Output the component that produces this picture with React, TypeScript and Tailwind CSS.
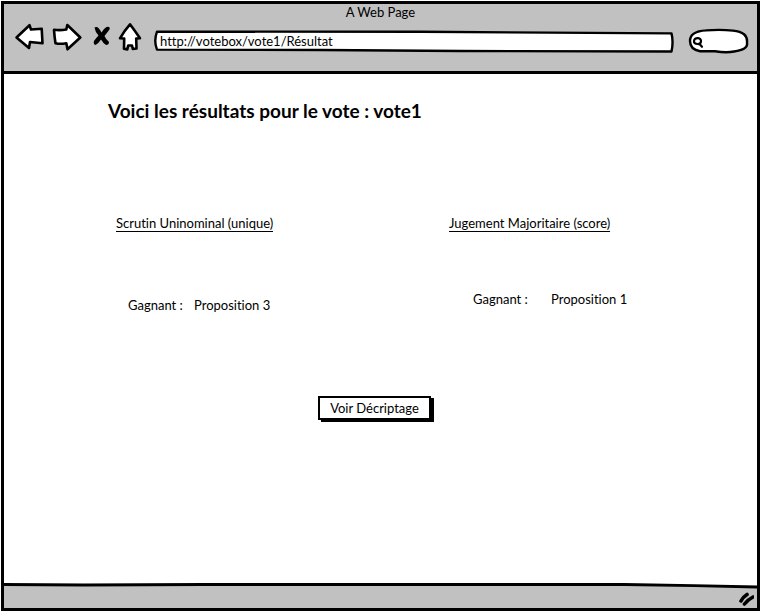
import type { ReactNode } from "react";

function ToolButton({ label, box, className, children }: { label: string; box: string; className: string; children: ReactNode }) {
  return (
    <button type="button" aria-label={label} className={`h-[30px] shrink-0 ${className}`}>
      <svg
        viewBox={box}
        className="block h-full w-full"
        fill="white"
        stroke="black"
        strokeWidth="2.6"
        strokeLinejoin="round"
        strokeLinecap="round"
      >
        {children}
      </svg>
    </button>
  );
}

function Result({ title, winner, className, rowClass, labelClass }: { title: string; winner: string; className: string; rowClass: string; labelClass: string }) {
  return (
    <section className={className}>
      <h2 className="w-fit border-b border-black leading-4">{title}</h2>
      <dl className={`flex leading-4 ${rowClass}`}>
        <dt className={`shrink-0 ${labelClass}`}>Gagnant :</dt>
        <dd>{winner}</dd>
      </dl>
    </section>
  );
}

export default function App() {
  return (
    <div className="flex min-h-screen flex-col bg-white p-px font-['Lato','Open_Sans',sans-serif] text-[13px] text-black [font-variant-ligatures:none]">
      <div className="flex grow flex-col border-[3px] border-black">
        <header className="border-b-[3px] border-black bg-[#c1c1c1] pb-[17px]">
          <p className="pt-px text-center leading-[15px]">A Web Page</p>
          <div className="flex items-center pr-2 pl-2.5">
            <ToolButton label="Précédent" box="14 22 31 30" className="w-[31px]">
              <path d="M16.5 37.5 29.5 25.2 31 29.5 41.7 28.7 42.5 43.3 30 42 29 48Z" />
            </ToolButton>
            <ToolButton label="Suivant" box="51 22 32 30" className="ml-1.5 w-8">
              <path d="M54 29.8Q60 30.6 66.3 29.5L67.3 25 80.3 37.5 67.5 49.3 66.3 43.2Q60 44.4 55.5 43.2Q54.5 37 54 29.8Z" />
            </ToolButton>
            <ToolButton label="Arrêter" box="91 22 21 30" className="ml-2 w-[21px]">
              <path
                d="M94.500 27.500Q98 25 101.500 32.500Q104 28 106.500 27Q110.500 26 109.500 29.500L104.500 36Q106 39.500 109 42Q109 45 106 45Q103 43 101 39.500Q98.500 43.500 95.500 45Q93 44 94 41Q96 38 98.500 35.500Q95 31.500 94.500 27.500Z"
                fill="black"
                stroke="none"
              />
            </ToolButton>
            <ToolButton label="Accueil" box="117 22 26 30" className="ml-[5px] w-[26px]">
              <path d="M130 24.3Q135 31 140 38.3L136.2 38.5 136.5 48.5 132.8 49 132 45.5 128.2 45.5 127.3 49.4 124 48.8 124.2 38.5 120 38.3Q124 31 130 24.3Z" />
            </ToolButton>
            <div className="relative mt-2 ml-2.5 h-6 grow">
              <svg
                viewBox="153 29 521 24"
                preserveAspectRatio="none"
                className="absolute inset-0 h-full w-full"
                fill="white"
                stroke="black"
                strokeWidth="2.4"
                strokeLinejoin="round"
                aria-hidden="true"
              >
                <path d="M157 31.6L420 31.8 671.5 33.4Q673.6 42 671.5 51.5L460 51 320 50 157 49.6Q153.5 41 157 31.6Z" />
              </svg>
              <input
                type="text"
                aria-label="Adresse"
                defaultValue="http://votebox/vote1/Résultat"
                className="relative block h-6 w-full bg-transparent pl-[7px] leading-4 outline-none"
              />
            </div>
            <div className="relative mt-2 ml-3.5 h-[26px] w-[61px] shrink-0">
              <svg
                viewBox="688 28 61 26"
                className="absolute inset-0 h-full w-full"
                fill="white"
                stroke="black"
                strokeWidth="2.4"
                strokeLinecap="round"
                aria-hidden="true"
              >
                <path d="M690 41C690 34 696 31 706 30.4Q720 29.2 733 30.6Q748 32 747 42.5C748 48 743 50 734 51.5Q726 53 715 51.2L700 51.2C693 50 690 46 690 41Z" />
                <path d="M694 41.500Q694 38 698 38.200 701.300 38.500 701 41.500 700.500 44.300 697.500 44 694 43.800 694 41.500ZM699.500 44L702 46.800" strokeWidth="2.2" />
              </svg>
              <input type="search" aria-label="Rechercher" className="relative ml-4 block h-[26px] w-10 bg-transparent outline-none" />
            </div>
          </div>
        </header>

        <main className="grow pb-10">
          <h1 className="ml-[104px] pt-[23px] text-[19px] leading-7 font-bold">
            Voici les résultats pour le vote : vote1
          </h1>
          <div className="mt-[90px] grid grid-cols-[44%_1fr] pl-[112px]">
            <Result title="Scrutin Uninominal (unique)" winner="Proposition 3" className="" rowClass="mt-[65px] ml-3" labelClass="w-[66px]" />
            <Result title="Jugement Majoritaire (score)" winner="Proposition 1" className="ml-[51px]" rowClass="mt-[59px] ml-6" labelClass="w-[78px]" />
          </div>
          <div className="mt-[83px] flex justify-center pr-3">
            <button type="button" className="h-6 border-2 border-black bg-white px-2.5 leading-4 shadow-[3px_2px_0_#000]">
              Voir Décriptage
            </button>
          </div>
        </main>

        <footer className="relative flex h-[25px] items-end justify-end bg-[#c1c1c1] pr-[3px] pb-0.5">
          <svg viewBox="0 0 753 8" preserveAspectRatio="none" className="absolute inset-x-0 top-0 h-2 w-full" aria-hidden="true">
            <path d="M0 0H753V3.5L620 1.5 0 1.5Z" fill="white" />
            <path d="M0 1.5 80 2 200 1.5 620 1.5 690 2.7 753 4" fill="none" stroke="black" strokeWidth="2.8" />
          </svg>
          <svg viewBox="738 592 16 14" className="relative h-3.5 w-4" fill="none" stroke="black" strokeLinecap="round" aria-hidden="true">
            <path d="M741 601Q743 597 747 594.5M744.5 604Q748 599.5 753 597" strokeWidth="3.6" />
          </svg>
        </footer>
      </div>
    </div>
  );
}
